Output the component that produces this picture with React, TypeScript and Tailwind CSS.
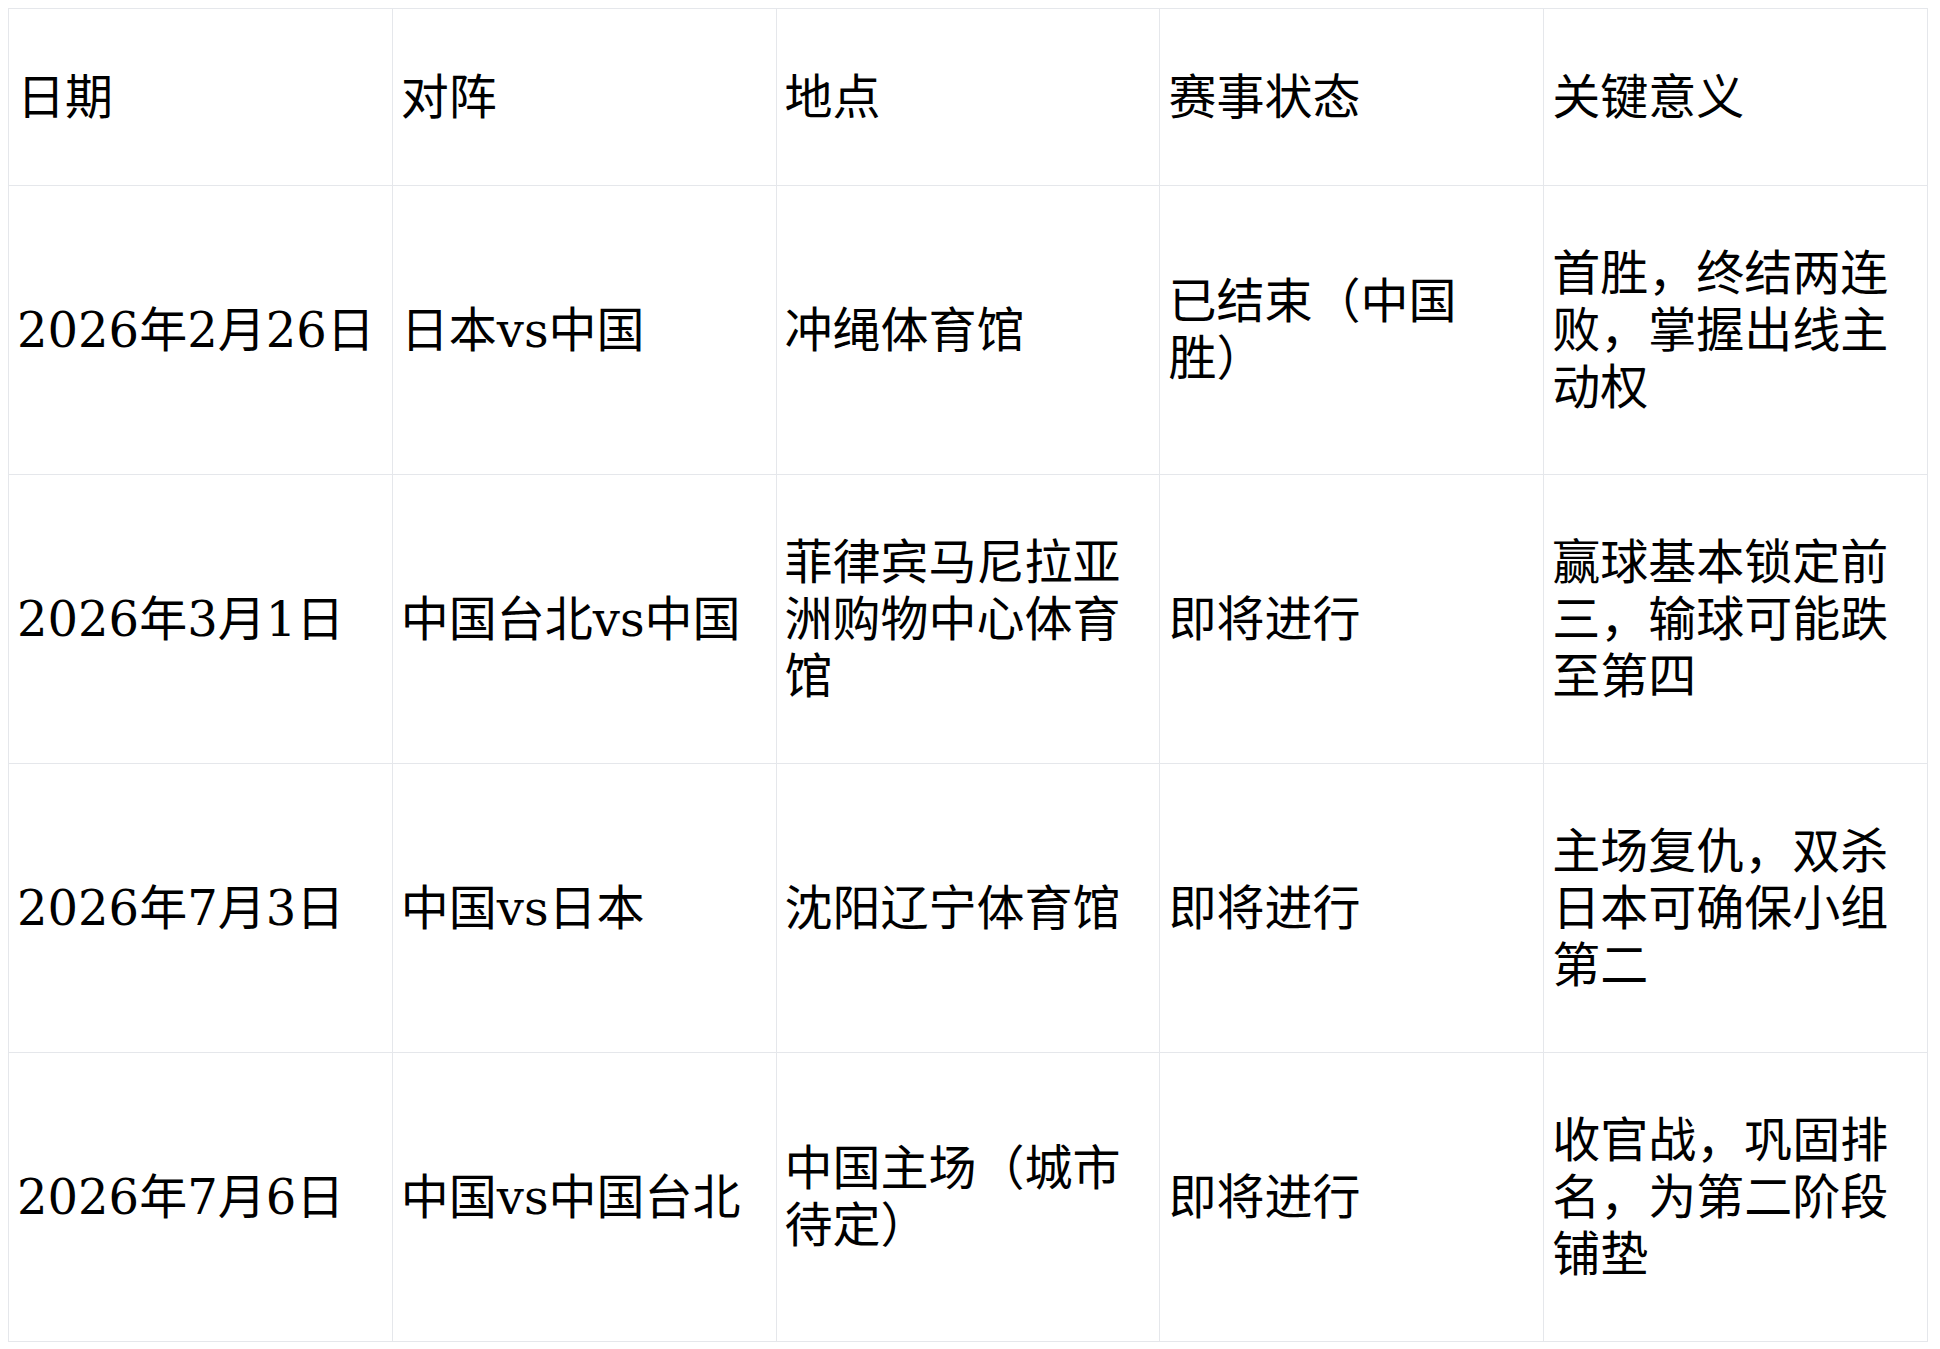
const headers = ["日期", "对阵", "地点", "赛事状态", "关键意义"];

const rows: string[][] = [
  ["2026年2月26日", "日本vs中国", "冲绳体育馆", "已结束（中国胜）", "首胜，终结两连败，掌握出线主动权"],
  ["2026年3月1日", "中国台北vs中国", "菲律宾马尼拉亚洲购物中心体育馆", "即将进行", "赢球基本锁定前三，输球可能跌至第四"],
  ["2026年7月3日", "中国vs日本", "沈阳辽宁体育馆", "即将进行", "主场复仇，双杀日本可确保小组第二"],
  ["2026年7月6日", "中国vs中国台北", "中国主场（城市待定）", "即将进行", "收官战，巩固排名，为第二阶段铺垫"],
];

export default function App() {
  return (
    <div className="min-h-screen bg-white pt-2 pl-2 pr-3">
      <table
        className="w-full table-fixed border-collapse text-[48px] leading-[57px] text-black [text-spacing-trim:space-all]"
        style={{ fontFamily: '"DejaVu Serif", "Noto Sans CJK SC", serif' }}
      >
        <thead>
          <tr className="h-[177px]">
            {headers.map((h) => (
              <th
                key={h}
                className="border border-[#e5e7eb] px-2 text-left align-middle font-normal"
              >
                {h}
              </th>
            ))}
          </tr>
        </thead>
        <tbody>
          {rows.map((r, i) => (
            <tr key={i} className="h-[289px]">
              {r.map((c, j) => (
                <td
                  key={j}
                  className="border border-[#e5e7eb] px-2 align-middle break-all"
                >
                  {c}
                </td>
              ))}
            </tr>
          ))}
        </tbody>
      </table>
    </div>
  );
}
